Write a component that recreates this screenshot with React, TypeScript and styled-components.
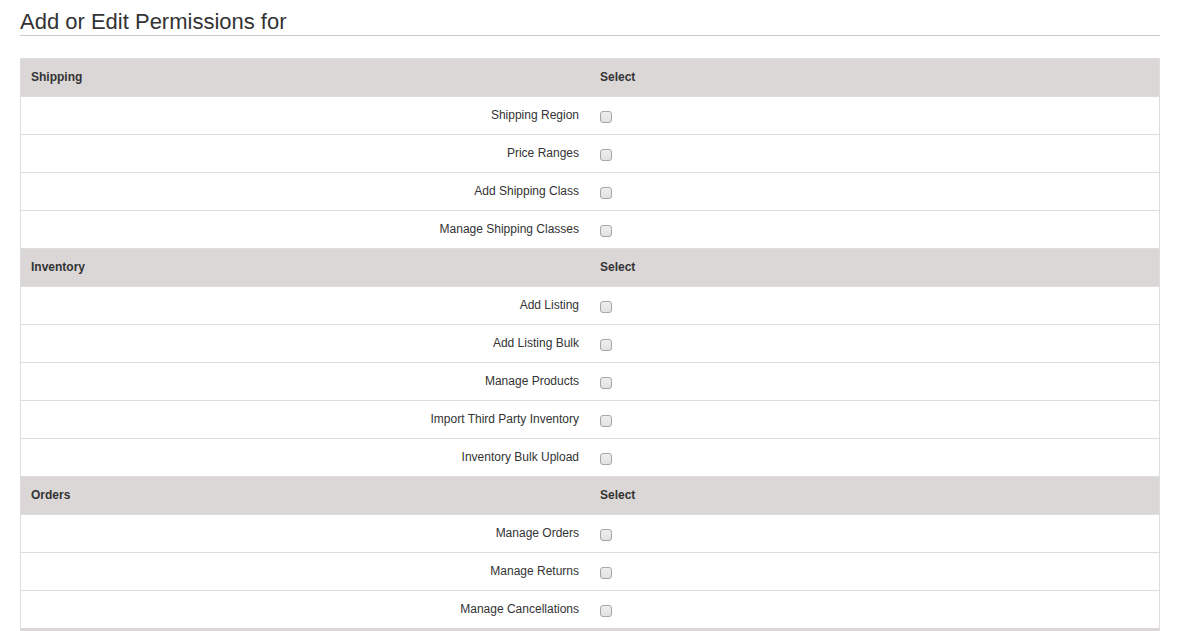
import React from 'react';
import styled, { createGlobalStyle } from 'styled-components';

const GlobalStyle = createGlobalStyle`
  body {
    margin: 0;
    background: #fff;
    font-family: "Liberation Sans", Arial, Helvetica, sans-serif;
    color: #333;
  }
`;

const Page = styled.div`
  padding: 10px 19px 0 20px;
`;

const Title = styled.h2`
  margin: 0 0 22px 0;
  padding-bottom: 1px;
  font-size: 22px;
  font-weight: 400;
  line-height: 24px;
  color: #333;
  border-bottom: 1px solid #ccc;
`;

const Table = styled.table`
  width: 100%;
  border-collapse: collapse;
  border: 1px solid #ddd;
  font-size: 12px;
`;

const HeadRow = styled.tr`
  background: #dbd7d7;
`;

const HeadCell = styled.th<{ $first?: boolean }>`
  text-align: left;
  font-weight: 700;
  padding: 10px 10px;
  line-height: 17px;
  width: ${(p) => (p.$first ? '50%' : 'auto')};
  border-top: 1px solid #ddd;
`;

const Row = styled.tr`
  border-top: 1px solid #ddd;
`;

const LabelCell = styled.td`
  text-align: right;
  padding: 10px 11px 10px 10px;
  line-height: 17px;
`;

const BoxCell = styled.td`
  padding: 10px 10px;
  line-height: 17px;
`;

const Check = styled.input`
  appearance: none;
  -webkit-appearance: none;
  box-sizing: border-box;
  margin: 0;
  width: 12px;
  height: 12px;
  vertical-align: middle;
  position: relative;
  top: 1px;
  border: 1px solid #a6a6a6;
  border-radius: 3px;
  background: linear-gradient(#eeeeee, #e2e2e2);

  &:checked {
    background: #4a90d9;
    border-color: #3a78b8;
  }
`;

const FootBand = styled.tr`
  background: #dbd7d7;

  td {
    height: 20px;
    padding: 0;
  }
`;

const sections: { name: string; items: string[] }[] = [
  {
    name: 'Shipping',
    items: ['Shipping Region', 'Price Ranges', 'Add Shipping Class', 'Manage Shipping Classes'],
  },
  {
    name: 'Inventory',
    items: [
      'Add Listing',
      'Add Listing Bulk',
      'Manage Products',
      'Import Third Party Inventory',
      'Inventory Bulk Upload',
    ],
  },
  {
    name: 'Orders',
    items: ['Manage Orders', 'Manage Returns', 'Manage Cancellations'],
  },
];

const App = () => {
  return (
    <Page>
      <GlobalStyle />
      <Title>Add or Edit Permissions for</Title>
      <Table>
        <tbody>
          {sections.map((s) => (
            <React.Fragment key={s.name}>
              <HeadRow>
                <HeadCell $first>{s.name}</HeadCell>
                <HeadCell>Select</HeadCell>
              </HeadRow>
              {s.items.map((item) => (
                <Row key={item}>
                  <LabelCell>{item}</LabelCell>
                  <BoxCell>
                    <Check type="checkbox" />
                  </BoxCell>
                </Row>
              ))}
            </React.Fragment>
          ))}
          <FootBand>
            <td colSpan={2} />
          </FootBand>
        </tbody>
      </Table>
    </Page>
  );
};

export default App;
